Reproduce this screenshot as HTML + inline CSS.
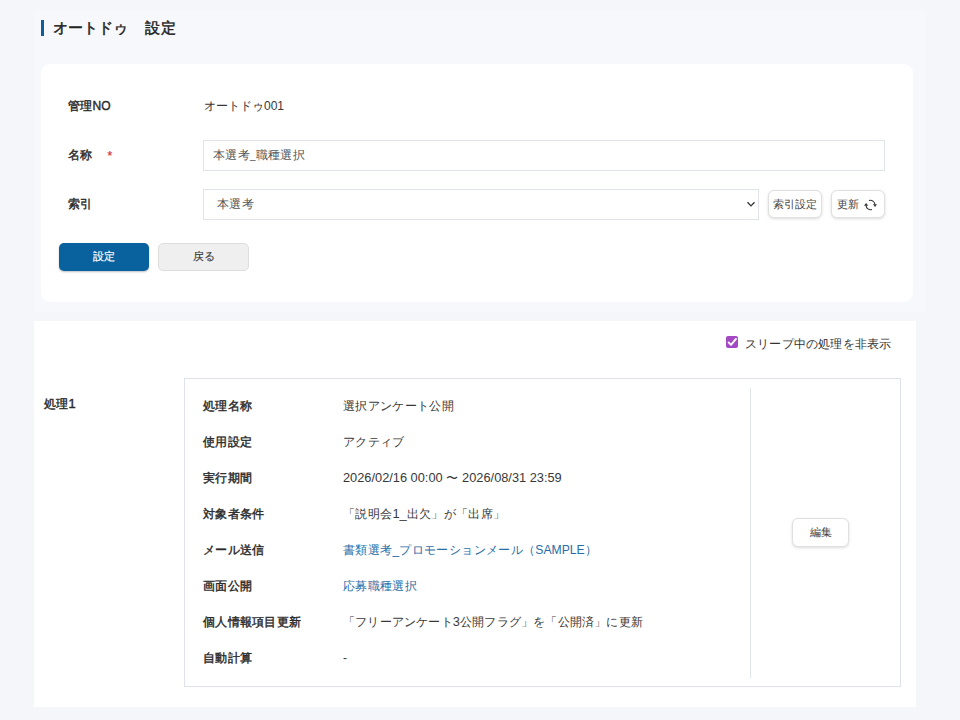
<!DOCTYPE html>
<html lang="ja">
<head>
<meta charset="utf-8">
<style>
*{box-sizing:border-box;margin:0;padding:0}
html,body{width:960px;height:720px;overflow:hidden}
body{background:#f5f6fa;font-family:"Liberation Sans",sans-serif;color:#333;position:relative}
.abs{position:absolute}
.wrap{position:absolute;left:35px;top:10px;width:890px;height:302px;background:#f6f8fb}
.title{position:absolute;left:53px;top:18px;font-size:15px;font-weight:normal;-webkit-text-stroke:.45px #222;color:#222;line-height:20px;white-space:nowrap}
.tbar{position:absolute;left:41px;top:19.5px;width:2.6px;height:16.5px;background:#0f5e9c}
.card{position:absolute;left:41px;top:64px;width:872px;height:238px;background:#fff;border-radius:9px}
.lbl{position:absolute;font-size:12px;letter-spacing:.3px;font-weight:normal;-webkit-text-stroke:.4px #2a2a2a;color:#2a2a2a;line-height:16px;white-space:nowrap}
.val{position:absolute;font-size:12px;letter-spacing:.35px;color:#383838;line-height:16px;white-space:nowrap}
.req{color:#d9302c;-webkit-text-stroke:.2px #d9302c;margin-left:15px;position:relative;top:.5px}
.input{position:absolute;border:1px solid #e1e3eb;background:#fff}
.btn{position:absolute;border-radius:5px;font-size:11px;text-align:center;white-space:nowrap}
.sbtn{background:#fff;border:1px solid #e0e0e0;border-radius:6px;box-shadow:0 1px 3px rgba(0,0,0,.14);color:#444}
.sec{position:absolute;left:34px;top:321px;width:882px;height:386px;background:#fff}
.box{position:absolute;left:184px;top:378px;width:717px;height:309px;border:1px solid #dfe2ea}
.vdiv{position:absolute;left:750px;top:388px;width:1px;height:290px;background:#e2e4ec}
.link{color:#2a6ea6}
.en{letter-spacing:0;font-size:12.8px}
</style>
</head>
<body>
<div class="wrap"></div>
<div class="tbar"></div>
<div class="title">オートドゥ　<span style="margin-left:2px;letter-spacing:.5px">設定</span></div>

<div class="card"></div>
<div class="lbl" style="left:68px;top:98px">管理<span class="en" style="font-size:12px">NO</span></div>
<div class="val" style="left:204px;top:98px;letter-spacing:0">オートドゥ<span class="en" style="font-size:12px">001</span></div>

<div class="lbl" style="left:68px;top:147px">名称<span class="req">*</span></div>
<div class="input" style="left:203px;top:140px;width:682px;height:31px"></div>
<div class="val" style="left:213px;top:147px;color:#555">本選考<span class="en" style="font-size:10px">_</span>職種選択</div>

<div class="lbl" style="left:68px;top:196px">索引</div>
<div class="input" style="left:203px;top:189px;width:556px;height:31px"></div>
<div class="val" style="left:217px;top:196px;color:#555">本選考</div>
<svg class="abs" style="left:746px;top:200px" width="10" height="8" viewBox="0 0 10 8"><path d="M1.5 2.3 L5 5.9 L8.5 2.3" fill="none" stroke="#333" stroke-width="1.3"/></svg>

<div class="btn sbtn" style="left:768px;top:190px;width:54px;height:28px;line-height:26px">索引設定</div>
<div class="btn sbtn" style="left:831px;top:190px;width:54px;height:28px;line-height:26px;text-align:left;padding-left:5px;letter-spacing:.3px">更新</div>
<svg class="abs" style="left:863px;top:198px" width="15" height="14" viewBox="0 0 15 14"><path d="M6 2.6 A4.4 4.4 0 0 1 11.9 6.6" fill="none" stroke="#333" stroke-width="1.1"/><path d="M10 6.3 L14 6.3 L12 9 Z" fill="#333"/><path d="M3.1 7.4 A4.4 4.4 0 0 0 9 11.4" fill="none" stroke="#333" stroke-width="1.1"/><path d="M1 7.7 L5.2 7.7 L3.1 5 Z" fill="#333"/></svg>

<div class="btn" style="left:59px;top:243px;width:90px;height:28px;line-height:26px;background:#09619e;color:#fff;-webkit-text-stroke:.2px #fff;box-shadow:0 1px 2px rgba(0,0,0,.25)">設定</div>
<div class="btn" style="left:158px;top:243px;width:91px;height:28px;line-height:24px;background:#efefef;border:1px solid #dedede;color:#3a3a3a;-webkit-text-stroke:.15px #3a3a3a">戻る</div>

<div class="sec"></div>
<div class="abs" style="left:726px;top:336px;width:12px;height:12px;border-radius:2px;background:#a449c4"></div>
<svg class="abs" style="left:726px;top:336px" width="12" height="12" viewBox="0 0 12 12"><path d="M2.6 6.4 L5 8.8 L10 2.9" fill="none" stroke="#fff" stroke-width="1.9" stroke-linecap="round" stroke-linejoin="round"/></svg>
<div class="val" style="left:745px;top:336px;font-size:12px;letter-spacing:.2px;color:#333">スリープ中の処理を非表示</div>

<div class="lbl" style="left:44px;top:396px">処理<span class="en">1</span></div>
<div class="box"></div>
<div class="vdiv"></div>

<div class="lbl" style="left:203px;top:398px">処理名称</div>
<div class="val" style="left:343px;top:398px">選択アンケート公開</div>
<div class="lbl" style="left:203px;top:434px">使用設定</div>
<div class="val" style="left:343px;top:434px">アクティブ</div>
<div class="lbl" style="left:203px;top:470px">実行期間</div>
<div class="val" style="left:343px;top:470px"><span class="en">2026/02/16 00:00 </span>〜<span class="en"> 2026/08/31 23:59</span></div>
<div class="lbl" style="left:203px;top:506px">対象者条件</div>
<div class="val" style="left:343px;top:506px">「説明会<span class="en">1_</span>出欠」が「出席」</div>
<div class="lbl" style="left:203px;top:542px">メール送信</div>
<div class="val link" style="left:343px;top:542px">書類選考_プロモーションメール（<span class="en" style="font-size:12.2px">SAMPLE</span>）</div>
<div class="lbl" style="left:203px;top:578px">画面公開</div>
<div class="val link" style="left:343px;top:578px">応募職種選択</div>
<div class="lbl" style="left:203px;top:614px">個人情報項目更新</div>
<div class="val" style="left:343px;top:614px;letter-spacing:.2px">「フリーアンケート<span class="en">3</span>公開フラグ」を「公開済」に更新</div>
<div class="lbl" style="left:203px;top:650px">自動計算</div>
<div class="val" style="left:343px;top:650px">-</div>

<div class="btn sbtn" style="left:792px;top:518px;width:57px;height:29px;line-height:27px">編集</div>
</body>
</html>
